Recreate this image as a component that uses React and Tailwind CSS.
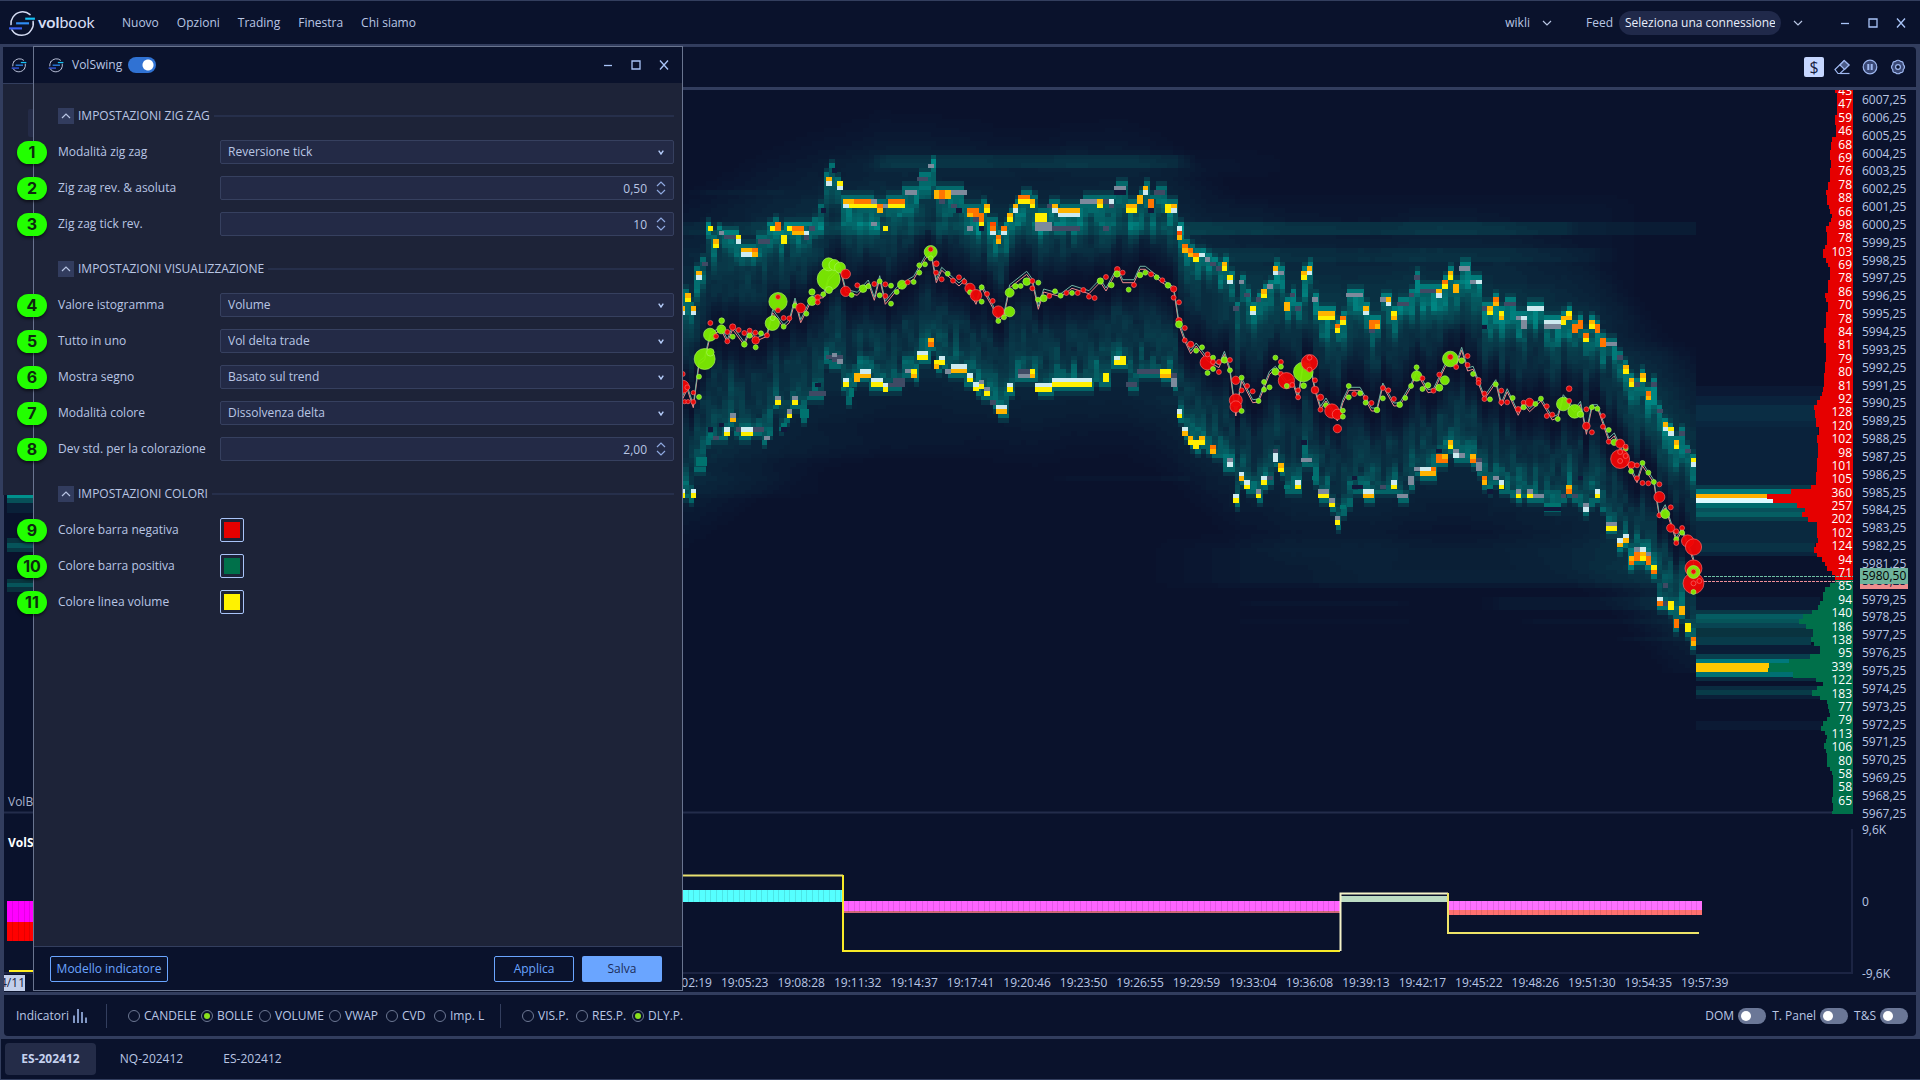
import React from "react";

/* ---------- chart data ---------- */

// Two recorded blocks of the session, each with its own sampling grid.
const MORNING = { x: 680, y: 130, sx: 1 / 3, sy: 1 / 3 };
const EVENING = { x: 1180, y: 220, sx: 540 / 1568, sy: 1 / 3 };

const place = (g, x, y) => [g.x + x * g.sx, g.y + y * g.sy];

// Liquidity marks: [x, y, width, one colour key for each price row]
const UPPER_A = [
  [14,490,18,"AY"],[0,529,14,"AW"],[33,529,14,"AW"],[48,423,17,"AW"],[66,395,17,"D"],[84,289,15,"Y"],[99,328,18,"AY"],[117,302,15,"G"],[133,315,34,"D"],[167,315,16,"YW"],[183,354,17,"AW"],[200,354,18,"AW"],[217,354,17,"OA"],[234,328,36,"D"],[270,289,15,"Y"],[285,276,17,"OO"],[302,315,18,"YY"],[320,289,16,"Y"],[336,289,36,"OA"],[372,302,14,"WD"],[387,289,17,"D"],[423,235,14,"N"],[438,141,18,"AW"],[455,115,16,"N"],[471,154,18,"YW"],[489,208,18,"AW"],[507,208,16,"AY"],[522,208,51,"OY"],[573,208,18,"GY"],[591,222,17,"OA"],[608,222,16,"G"],[624,208,51,"OY"],[675,181,36,"G"],[711,141,33,"D"],[744,101,17,"G"],[761,181,17,"AA"],[778,181,18,"OO"],[796,181,17,"AA"],[813,181,47,"G"],[861,235,36,"OA"],[880,248,18,"OD"],[897,248,15,"OOY"],[912,222,17,"AY"],[930,276,18,"ROW"],[947,315,16,"OA"],[963,289,18,"OW"],[981,249,18,"AY"],[999,222,15,"AW"],[1014,195,36,"OY"],[1050,208,15,"AY"],[1065,249,36,"YY"],[1101,222,15,"D"],[1116,222,18,"AW"],[1134,235,66,"AW"],[1200,208,51,"G"],[1251,208,17,"AY"],[1268,208,18,"D"],[1286,208,16,"WD"],[1302,168,35,"GN"],[1338,222,34,"AY"],[1372,195,17,"AA"],[1389,168,15,"AW"],[1404,208,17,"OO"],[1422,181,33,"D"],[1455,222,20,"YY"],[1472,222,19,"AW"],[1491,289,15,"WRA"],[1506,342,18,"OO"],[1524,354,16,"OO"],
];
const EXTRA_A = [
  [574,276,17,"G"],[609,289,15,"Y"],[778,208,17,"D"],[813,222,17,"D"],[828,235,17,"N"],[897,289,14,"N"],[861,289,18,"G"],[1065,276,50,"GG"],[1116,289,84,"D"],[1268,289,18,"D"],[1404,235,17,"N"],[405,758,17,"N"],[624,758,16,"D"],[84,892,15,"N"],[117,878,15,"N"],[99,918,18,"D"],[302,892,18,"N"],
];
const LOWER_A = [
  [0,1077,14,"WY"],[33,1077,14,"WY"],[48,980,34,"TT"],[84,910,15,"T"],[132,892,18,"WY"],[150,850,18,"GA"],[167,892,16,"D"],[183,892,35,"WY"],[218,892,34,"D"],[252,918,18,"G"],[285,798,17,"GY"],[302,878,18,"T"],[320,838,16,"GY"],[336,798,18,"GY"],[360,838,26,"TT"],[387,784,50,"D"],[438,675,18,"D"],[455,668,16,"GD"],[471,675,18,"DG"],[489,744,18,"WY"],[507,775,15,"TT"],[522,730,18,"AA"],[540,718,33,"WA"],[573,744,36,"WY"],[609,758,15,"WY"],[640,744,34,"DD"],[675,716,18,"G"],[693,718,18,"YA"],[711,663,33,"WY"],[744,624,17,"AO"],[761,690,17,"YA"],[778,677,17,"WY"],[795,718,18,"G"],[813,703,48,"WA"],[861,730,18,"WY"],[879,757,18,"WY"],[897,750,15,"GY"],[912,770,18,"GY"],[930,811,18,"D"],[948,825,33,"WA"],[981,758,18,"WY"],[1014,718,36,"DG"],[1050,718,15,"YA"],[1065,758,51,"WY"],[1116,744,120,"WY"],[1269,730,18,"YY"],[1302,677,18,"WY"],[1320,677,17,"YY"],[1338,757,33,"D"],[1371,718,69,"D"],[1440,718,33,"YA"],[1473,730,18,"DGG"],[1491,838,15,"WY"],[1506,892,18,"WA"],[1524,918,16,"YO"],
];
const UPPER_B = [
  [6,72,17,"OA"],[23,85,14,"OA"],[38,99,17,"OY"],[55,99,17,"W"],[72,112,16,"G"],[88,125,17,"D"],[105,139,17,"D"],[122,126,14,"AY"],[136,166,18,"YW"],[154,259,17,"D"],[171,180,15,"G"],[186,219,18,"D"],[204,259,16,"YW"],[220,232,15,"D"],[236,208,17,"AY"],[253,193,16,"G"],[270,139,15,"AW"],[285,153,16,"G"],[302,246,17,"AA"],[319,219,16,"D"],[335,259,17,"D"],[352,153,16,"AY"],[368,139,15,"AW"],[384,232,17,"G"],[401,274,48,"AY"],[449,312,17,"OY"],[465,287,17,"OY"],[482,219,49,"G"],[531,259,18,"AW"],[549,300,17,"OO"],[566,300,15,"OA"],[582,232,16,"G"],[598,232,15,"AW"],[613,274,17,"YA"],[630,246,34,"D"],[664,219,16,"D"],[680,166,17,"D"],[697,206,47,"D"],[744,206,17,"AW"],[761,180,17,"OY"],[778,153,15,"AY"],[793,193,17,"AA"],[810,139,31,"G"],[842,180,17,"G"],[859,180,17,"W"],[877,259,14,"D"],[892,259,17,"AY"],[909,232,16,"OA"],[925,274,17,"YA"],[942,246,34,"D"],[976,287,14,"G"],[990,287,17,"WGG"],[1008,259,49,"W"],[1057,300,49,"WG"],[1106,287,16,"AY"],[1122,274,16,"YA"],[1138,312,18,"OO"],[1155,300,15,"OO"],[1170,340,18,"OY"],[1188,300,17,"AY"],[1205,312,15,"OO"],[1220,354,17,"OO"],[1237,366,31,"G"],[1268,406,17,"D"],[1285,434,18,"AY"],[1303,474,15,"AY"],[1319,487,17,"D"],[1335,460,18,"AY"],[1353,514,15,"OA"],[1368,487,17,"D"],[1385,567,17,"D"],[1402,607,16,"AW"],[1418,621,15,"YW"],[1433,661,17,"AY"],[1450,634,16,"D"],[1466,687,17,"D"],[1484,714,14,"YW"],
];
const EXTRA_B = [
  [877,314,14,"N"],[549,326,17,"D"],[500,768,14,"N"],[500,794,31,"N"],[352,661,17,"N"],[892,808,17,"N"],[1057,861,49,"N"],[1155,768,15,"N"],[744,687,17,"N"],[1402,1090,16,"D"],[1450,1130,16,"T"],
];
const LOWER_B = [
  [6,621,17,"WA"],[23,648,15,"AY"],[38,661,17,"YY"],[55,648,17,"AY"],[88,675,17,"OA"],[136,714,18,"GW"],[154,821,17,"WY"],[171,755,15,"WA"],[186,781,18,"WY"],[220,808,15,"GY"],[236,768,17,"WY"],[253,768,16,"D"],[270,687,15,"DWW"],[285,730,16,"AY"],[302,794,17,"T"],[335,781,16,"WY"],[352,714,30,"G"],[384,768,17,"T"],[401,808,32,"GY"],[433,835,17,"GY"],[449,888,17,"GY"],[465,855,17,"T"],[500,794,31,"N"],[531,808,32,"WA"],[582,794,17,"D"],[613,781,17,"WY"],[630,821,32,"G"],[662,768,17,"GG"],[680,741,17,"G"],[697,741,32,"WA"],[729,741,15,"OA"],[744,703,17,"OO"],[761,703,17,"AO"],[778,661,15,"AY"],[793,687,17,"GW"],[810,700,17,"G"],[842,703,17,"AO"],[859,714,17,"DGG"],[877,768,14,"OA"],[892,794,17,"T"],[909,768,16,"G"],[925,781,17,"WY"],[976,808,14,"GY"],[1008,808,17,"GY"],[1025,821,32,"G"],[1057,848,49,"T"],[1106,821,15,"D"],[1122,794,16,"AO"],[1138,821,17,"D"],[1170,848,18,"GW"],[1205,808,15,"WY"],[1237,905,31,"GY"],[1268,955,17,"WA"],[1285,942,18,"WA"],[1303,1009,15,"AO"],[1318,982,17,"GOO"],[1335,982,18,"WAY"],[1353,996,15,"GOO"],[1368,1036,17,"YO"],[1385,1130,17,"WO"],[1402,1144,16,"D"],[1418,1144,15,"YY"],[1433,1198,17,"OO"],[1450,1157,16,"AA"],[1466,1209,17,"YY"],[1484,1250,14,"OA"],
];

const MARK_COLORS = { O: "#ff7500", R: "#ff4a00", A: "#ffb400", Y: "#fff000", W: "#cdeaf0", G: "#7d8a9c", D: "#3f4a64", N: "#10183a", T: "#00736f" };

// Trades: [x, y, radius, side]; side 1 buys, 0 sells
const TRADES_A = [
  [8,732,8,0],[8,770,20,0],[22,772,8,0],[40,788,7,0],[14,815,7,0],[24,815,7,0],[40,816,8,0],[74,687,32,1],[91,667,12,1],[57,740,8,1],[57,801,8,1],[91,579,8,0],[90,614,20,1],[108,619,8,0],[125,572,9,1],[124,598,14,1],[142,606,8,0],[142,634,8,0],[158,591,10,0],[158,620,8,1],[176,600,8,0],[193,609,8,0],[193,643,9,1],[209,602,8,0],[209,617,8,1],[226,608,8,0],[227,631,12,0],[227,652,8,1],[243,610,8,1],[261,616,8,0],[277,580,22,1],[278,564,8,1],[294,515,28,1],[294,501,8,0],[294,541,8,0],[311,564,8,0],[328,565,8,0],[311,590,8,1],[345,527,8,1],[362,534,15,0],[379,551,8,1],[396,486,10,1],[396,513,14,1],[413,502,9,0],[413,517,8,0],[430,493,8,1],[446,447,35,1],[446,403,20,1],[463,405,17,1],[480,413,17,1],[447,480,11,1],[497,432,15,0],[497,484,16,0],[515,495,8,1],[532,466,8,0],[549,476,12,1],[565,469,8,1],[583,462,8,0],[599,454,8,1],[599,496,8,1],[616,463,8,0],[616,498,8,0],[633,467,8,1],[633,521,8,1],[650,486,8,1],[666,464,14,1],[683,457,8,0],[701,456,8,1],[718,406,8,1],[718,428,8,1],[735,403,8,1],[752,366,20,1],[752,358,8,0],[752,385,8,1],[769,401,9,0],[768,428,8,0],[785,448,8,0],[803,431,8,1],[819,452,8,0],[837,442,8,0],[853,455,8,0],[870,475,16,0],[870,487,8,1],[888,496,18,0],[905,472,8,1],[905,515,8,1],[921,492,8,0],[938,513,8,0],[955,545,18,0],[955,573,8,1],[972,562,8,1],[989,545,16,1],[989,488,14,1],[1006,469,9,1],[1022,468,8,1],[1040,455,12,1],[1057,453,8,0],[1057,475,8,0],[1075,458,8,1],[1074,509,8,1],[1091,505,11,1],[1108,498,8,0],[1125,484,8,1],[1142,497,8,1],[1159,489,8,0],[1176,489,8,1],[1193,489,8,0],[1210,480,8,0],[1227,500,8,0],[1244,504,8,0],[1261,453,10,1],[1278,441,8,0],[1294,465,9,1],[1312,418,9,0],[1311,432,10,1],[1328,428,8,0],[1346,479,8,1],[1362,465,8,0],[1380,435,9,1],[1396,428,8,1],[1413,433,8,0],[1430,442,8,1],[1447,451,8,0],[1464,466,9,1],[1481,477,10,0],[1481,503,8,0],[1497,517,8,0],[1497,572,10,0],[1497,583,11,1],
];
const TRADES_B = [
  [14,324,8,0],[14,361,8,0],[31,373,10,0],[47,392,8,1],[64,382,8,1],[79,428,22,0],[80,403,8,0],[96,413,8,1],[96,426,8,0],[113,426,8,0],[96,447,8,1],[80,459,8,1],[113,456,8,0],[129,420,10,1],[145,420,8,0],[145,451,8,1],[162,481,13,0],[179,473,8,1],[195,498,8,0],[179,511,8,0],[211,514,8,0],[162,541,20,0],[162,560,18,0],[179,573,8,1],[228,543,8,1],[244,486,8,1],[244,509,8,1],[260,502,8,1],[277,413,8,1],[277,455,11,1],[293,426,8,0],[293,440,8,1],[293,462,8,0],[309,482,25,0],[310,498,8,1],[326,495,8,0],[343,511,8,0],[343,532,8,0],[358,456,30,1],[376,428,25,0],[376,413,8,0],[376,449,8,0],[359,497,9,1],[392,481,8,0],[392,510,12,0],[408,532,10,0],[408,569,8,0],[424,556,8,1],[441,573,22,0],[457,583,16,0],[473,572,8,1],[473,590,8,1],[457,626,13,0],[490,498,8,1],[490,532,8,1],[506,522,8,0],[523,520,8,1],[539,534,8,0],[539,548,8,1],[556,549,8,0],[572,570,9,1],[589,504,8,0],[589,535,8,1],[605,511,8,0],[621,537,8,0],[638,554,9,1],[654,534,8,1],[671,498,8,1],[687,442,8,1],[687,468,16,1],[704,475,8,0],[704,507,8,1],[720,496,9,1],[736,512,8,0],[753,464,8,0],[753,503,11,1],[769,481,14,1],[785,417,24,1],[785,411,9,0],[802,441,8,0],[818,422,9,1],[835,408,8,0],[835,435,8,0],[851,462,8,1],[867,480,8,0],[867,489,8,0],[884,521,8,0],[884,537,8,0],[900,538,8,1],[917,493,8,1],[933,512,8,0],[933,547,8,0],[950,547,8,0],[966,534,8,1],[982,568,9,0],[998,548,8,0],[998,562,8,1],[1015,547,13,0],[1032,552,8,1],[1048,536,8,1],[1065,559,8,0],[1065,588,8,0],[1081,584,8,0],[1097,597,8,1],[1113,552,21,1],[1130,506,9,0],[1130,543,8,0],[1146,574,21,1],[1163,583,10,1],[1180,568,8,0],[1180,618,12,0],[1196,637,8,0],[1196,562,8,1],[1212,566,8,1],[1228,588,8,0],[1228,620,8,0],[1245,630,8,1],[1245,665,8,0],[1261,667,10,1],[1278,671,14,0],[1294,686,8,1],[1294,680,8,0],[1278,717,29,0],[1278,696,8,0],[1294,708,8,0],[1278,723,8,0],[1311,735,11,0],[1310,754,8,1],[1327,736,8,0],[1327,775,8,0],[1343,729,8,1],[1343,789,8,0],[1360,758,8,1],[1360,790,8,0],[1376,786,8,1],[1392,793,8,0],[1392,831,17,0],[1392,886,8,0],[1409,882,14,1],[1425,862,8,0],[1425,924,13,0],[1441,934,8,0],[1441,958,8,1],[1441,969,8,0],[1458,924,8,0],[1458,938,8,1],[1474,963,19,0],[1491,981,25,0],[1491,1045,26,0],[1491,1090,32,0],[1491,1056,20,1],[1491,1055,8,0],[1508,1083,8,0],[1491,1090,8,0],[1491,1116,8,1],
];
const MID_A = [[0,820],[22,775],[40,830],[57,700],[74,687],[91,614],[124,598],[142,634],[158,595],[193,643],[209,602],[227,631],[261,616],[278,545],[311,590],[328,575],[345,510],[362,575],[396,505],[430,500],[446,447],[480,413],[497,484],[532,493],[565,456],[583,508],[599,443],[616,520],[650,478],[683,455],[701,445],[718,415],[735,385],[752,366],[769,455],[785,418],[837,465],[853,450],[888,520],[905,470],[938,530],[955,573],[972,555],[989,470],[1040,430],[1057,453],[1075,535],[1091,483],[1142,497],[1176,472],[1227,488],[1261,453],[1278,480],[1312,418],[1328,455],[1362,455],[1380,415],[1396,415],[1447,455],[1481,477],[1497,583]];
const MID_B = [[14,361],[31,398],[47,375],[80,420],[113,440],[129,400],[145,451],[162,585],[179,480],[211,545],[228,543],[260,460],[277,445],[310,490],[326,482],[343,535],[358,430],[376,428],[392,510],[408,565],[424,540],[457,600],[473,545],[490,508],[523,508],[556,570],[572,570],[589,495],[621,555],[638,554],[671,498],[687,455],[720,515],[736,512],[769,440],[785,417],[802,435],[818,388],[835,450],[851,445],[884,535],[917,485],[933,555],[950,512],[982,583],[998,550],[1015,572],[1048,540],[1081,597],[1097,590],[1113,530],[1146,574],[1163,550],[1180,640],[1196,560],[1212,560],[1245,660],[1261,645],[1294,720],[1327,785],[1343,735],[1376,786],[1392,890],[1409,860],[1441,960],[1458,930],[1491,1020],[1491,1090]];

// Volume profile outline: [bottom, left edge] in thirds of a pixel
const PROFILE_SELL = [
  [279,465],[345,471],[374,466],[410,468],[425,457],[450,454],[480,450],[505,454],[545,449],[570,443],[585,438],[614,442],[628,447],[642,450],[655,456],[666,453],[678,448],[695,438],[735,442],[748,436],[762,430],[773,430],[790,438],[800,444],[840,450],[880,444],[895,436],[905,438],[935,444],[985,438],[1030,432],[1085,438],[1120,434],[1162,432],[1175,429],[1188,426],[1200,420],[1215,411],[1230,402],[1255,406],[1280,409],[1305,417],[1330,411],[1375,414],[1415,411],[1455,408],[1467,393],[1482,333],[1497,261],[1510,279],[1523,351],[1536,376],[1550,366],[1565,384],[1615,411],[1630,414],[1640,408],[1658,402],[1670,411],[1685,426],[1698,435],[1712,441],[1725,456],[1740,465],
];
const PROFILE_BUY = [
  [1750,465],[1762,450],[1776,436],[1802,429],[1815,420],[1830,414],[1843,396],[1856,369],[1872,357],[1887,378],[1910,399],[1925,393],[1938,402],[1962,420],[1976,390],[1988,327],[2003,267],[2016,264],[2033,339],[2045,408],[2058,429],[2070,411],[2087,396],[2100,420],[2113,441],[2127,444],[2140,447],[2152,450],[2163,441],[2177,429],[2192,423],[2205,435],[2217,441],[2230,438],[2247,432],[2260,438],[2302,441],[2313,450],[2325,456],[2390,459],[2410,456],[2433,459],[2442,456],
];
const PROFILE_VALUES = [43,47,59,46,68,69,76,78,88,66,98,78,103,69,78,86,70,78,84,81,79,80,81,92,128,120,102,98,101,105,360,257,202,102,124,94,71,85,94,140,186,138,95,339,122,183,77,79,113,106,80,58,58,65];

// Resting orders right of the last trade: [top, bottom, right edge, colour]
const BOOK = [
  [386,396,1830,"#0b1934"],[396,405,1825,"#0a223c"],[405,421,1818,"#0a2d44"],[421,427,1818,"#0a263f"],[427,485,1818,"#0a223b"],[485,489,1812,"#083b4b"],[489,494,1791,"#00797b"],[494,498,1767,"#ffb000"],[498,503,1773,"#ddfaff"],[503,508,1797,"#006a6c"],[508,512,1805,"#08505a"],[512,517,1802,"#055e62"],[517,521,1808,"#083f4c"],[521,543,1818,"#0a293f"],[543,552,1815,"#093245"],[552,556,1818,"#0a243d"],
  [597,610,1820,"#0b1b35"],[610,614,1812,"#093846"],[614,619,1803,"#055c62"],[619,623,1799,"#065459"],[623,628,1806,"#084452"],[628,637,1813,"#09333f"],[637,645,1811,"#083b4a"],[645,654,1820,"#0a1c36"],[654,659,1810,"#083f4e"],[659,663,1789,"#00797c"],[663,672,1769,"#ffc800"],[672,677,1793,"#007072"],[677,681,1816,"#0a2b40"],[686,690,1817,"#0a2b40"],[690,695,1812,"#083b48"],[695,699,1820,"#0a1f38"],[721,730,1822,"#0b1a34"],
];

// Wide faint levels: [left, right, top, bottom, strength, edge softness]
const LEVELS = [
  [640,1720,222,235,0.14,30],[870,1196,155,168,0.16,20],[820,1300,144,180,0.07,80],[683,800,190,196,0.08,20],[1180,1583,222,234,0.1,20],
  [1180,1620,247,260,0.1,30],[1200,1650,190,330,0.08,60],[1600,1720,340,470,0.1,60],
  [1140,1720,532,590,0.15,120],[1300,1720,551,589,0.05,60],[1052,1200,474,480,0.08,20],
  [1233,1416,601,605,0.06,20],[1480,1700,598,612,0.1,20],[1233,1416,618,622,0.05,20],[1516,1700,618,622,0.07,20],[1610,1700,636,640,0.08,20],
  [640,830,460,500,0.08,60],[640,1000,425,462,0.06,80],
];

/* ---------- heatmap ---------- */

const X0 = 683;
const X1 = 1696;
const COLS = 180;
const CW = (X1 - X0) / COLS;
const RH = 13.4 / 3;
const Y0 = 92;
const ROWS = 130;
const STEPS = 28;

const rand = (a, b) => {
  const s = Math.sin(a * 127.1 + b * 311.7) * 43758.5453;
  return s - Math.floor(s);
};

// Value noise along one column, smooth over a few price rows
const grain = (c, r, span) => {
  const i = Math.floor(r / span);
  const f = r / span - i;
  return rand(c, i) * (1 - f) + rand(c, i + 1) * f - 0.5;
};

const clamp = (v) => Math.max(0, Math.min(1, v));

const toMarks = (list, g) =>
  list.map(([x, y, w, k]) => {
    const [px, py] = place(g, x, y);
    return { x: px, y: py, w: w * g.sx, k };
  });

const upper = [...toMarks(UPPER_A, MORNING), ...toMarks(UPPER_B, EVENING)];
const lower = [...toMarks(LOWER_A, MORNING), ...toMarks(LOWER_B, EVENING)];
const extra = [...toMarks(EXTRA_A, MORNING), ...toMarks(EXTRA_B, EVENING)];
const mid = [...MID_A.map(([x, y]) => place(MORNING, x, y)), ...MID_B.map(([x, y]) => place(EVENING, x, y))];
const trades = [
  ...TRADES_A.map(([x, y, r, s]) => [...place(MORNING, x, y), r / 3, s]),
  ...TRADES_B.map(([x, y, r, s]) => [...place(EVENING, x, y), r / 3, s]),
];

const interpolate = (pts, x) => {
  for (let i = 1; i < pts.length; i++) {
    if (x <= pts[i][0]) {
      const [ax, ay] = pts[i - 1];
      const [bx, by] = pts[i];
      return bx === ax ? by : ay + ((by - ay) * Math.max(0, x - ax)) / (bx - ax);
    }
  }
  return pts[pts.length - 1][1];
};

const bandAt = (marks, x) => {
  const hit = marks.find((m) => x >= m.x - 1 && x <= m.x + m.w);
  if (hit) return [hit.y, hit.y + hit.k.length * RH];
  const y = interpolate(marks.map((m) => [m.x + m.w / 2, m.y]), x);
  return [y, y + RH];
};

const shade = (t) => {
  const stops = [[0,10,17,44],[0.25,10,36,58],[0.5,8,64,77],[0.75,3,100,103],[1,0,138,134]];
  for (let i = 1; i < stops.length; i++) {
    if (t <= stops[i][0]) {
      const a = stops[i - 1];
      const b = stops[i];
      const f = (t - a[0]) / (b[0] - a[0]);
      return `rgb(${[1, 2, 3].map((k) => Math.round(a[k] + (b[k] - a[k]) * f)).join(",")})`;
    }
  }
  return "rgb(0,138,134)";
};

const buildHeatmap = () => {
  const paths = Array.from({ length: STEPS + 1 }, () => "");
  for (let c = 0; c < COLS; c++) {
    const x = X0 + c * CW;
    const cx = x + CW / 2;
    const [uTop, uBot] = bandAt(upper, cx);
    const [lTop, lBot] = bandAt(lower, cx);
    let uAvg = 0;
    let lAvg = 0;
    for (let k = -10; k <= 10; k++) {
      const sx = Math.min(X1 - 4, Math.max(X0 + 4, cx + k * CW));
      uAvg += bandAt(upper, sx)[0] / 21;
      lAvg += bandAt(lower, sx)[1] / 21;
    }
    const m = interpolate(mid, cx);
    const halo = 2 + Math.floor(rand(c, 5) * 3);
    let run = -1;
    let start = 0;
    for (let r = 0; r <= ROWS; r++) {
      const y = Y0 + r * RH + RH / 2;
      let v = 0;
      const n = grain(c, r, 3);
      const wide = grain(Math.floor(c / 12) + 500, r, 2);
      if (y < uTop) {
        const far = Math.max(0, uAvg - y);
        v = 0.3 * clamp(1 - far / 85) + wide * 0.06 * clamp(1 - far / 80);
        if (uTop - y < RH * 1.2) v = 0.8;
        else if (uTop - y < RH * 2.2) v = Math.max(v, 0.42);
      } else if (y > lBot) {
        const far = Math.max(0, y - lAvg);
        v = 0.26 * clamp(1 - far / 80) + wide * 0.06 * clamp(1 - far / 70);
        if (y - lBot < RH * 1.2) v = 0.74;
        else if (y - lBot < RH * 2.2) v = Math.max(v, 0.4);
      } else {
        const du = Math.max(0, y - uBot);
        const dl = Math.max(0, lTop - y);
        const near = clamp((Math.abs(y - m) - 9) / 30);
        v = (0.31 + n * 0.1) * near;
        if (du < dl) {
          if (du < RH * halo) v += (0.42 + n * 0.25) * near;
          else v += (0.3 + n * 0.3) * Math.exp(-(du - RH * halo) / 14) * near;
        } else if (dl < RH * (halo - 1)) v += (0.34 + n * 0.3) * near;
        else v += (0.22 + n * 0.34) * Math.exp(-(dl - RH * (halo - 1)) / 22) * near;
      }
      LEVELS.forEach(([a, b, t, e, s, soft]) => {
        if (cx > a && cx < b && y > t && y < e) {
          const fade = clamp((cx - a) / soft) * clamp((b - cx) / soft);
          const rise = e - t > 20 ? clamp((y - t) / 18) * clamp((e - y) / 8) : 1;
          v += s * fade * rise * (Math.abs(y - m) < 25 ? 0.2 : 1);
        }
      });
      const step = r === ROWS ? -2 : Math.round(clamp(v) * STEPS);
      if (step !== run) {
        if (run > 0) {
          paths[run] += `M${x.toFixed(2)} ${(Y0 + start * RH).toFixed(2)}h${CW.toFixed(2)}v${((r - start) * RH).toFixed(2)}h-${CW.toFixed(2)}z`;
        }
        run = step;
        start = r;
      }
    }
  }
  return paths;
};

const heatPaths = buildHeatmap();

const outline = (list, top) => {
  let d = `M1853 ${top / 3}`;
  let y = top;
  list.forEach(([bottom, edge]) => {
    d += `L${1680 + edge / 3} ${y / 3}V${bottom / 3}`;
    y = bottom;
  });
  return `${d}H1853Z`;
};

const line = (dy) => mid.map(([x, y]) => `${x.toFixed(1)},${(y + dy).toFixed(1)}`).join(" ");

function Marks({ list }) {
  return list.map((m, i) =>
    m.k.split("").map((k, j) => (
      <rect key={`${i}-${j}`} x={m.x} y={m.y + j * RH} width={m.w} height={RH} fill={MARK_COLORS[k]} />
    ))
  );
}

function Ticks({ from, to, top, bottom }) {
  let d = "";
  for (let x = from + 5.65; x < to; x += 5.65) d += `M${x.toFixed(1)} ${top}V${bottom}`;
  return <path d={d} stroke="#000" strokeOpacity=".1" />;
}

function Chart() {
  return (
    <svg viewBox="4 90 1849 884" preserveAspectRatio="xMaxYMin slice" className="block h-full w-full" role="img" aria-label="Heatmap ES-202412">
      <g shapeRendering="crispEdges">
        {heatPaths.map((d, i) => (d ? <path key={i} d={d} fill={shade(i / STEPS)} /> : null))}
        <Marks list={upper} />
        <Marks list={lower} />
        <Marks list={extra} />
        {BOOK.map(([t, b, r, c]) => (
          <rect key={t} x="1696" y={t} width={r - 1696} height={b - t} fill={c} />
        ))}
        <rect x="7" y="495" width="26" height="3" fill="#00908c" />
        <rect x="7" y="498" width="26" height="5" fill="#075058" />
        <rect x="7" y="503" width="26" height="10" fill="#0a2038" />
        <rect x="7" y="538" width="26" height="5" fill="#08343f" />
        <rect x="7" y="543" width="26" height="5" fill="#06545a" />
        <rect x="7" y="548" width="26" height="4" fill="#083844" />
        <rect x="7" y="579" width="26" height="4" fill="#08363f" />
        <rect x="7" y="583" width="26" height="4" fill="#06545a" />
        <rect x="7" y="587" width="26" height="5" fill="#0a303d" />
        <path d={outline(PROFILE_SELL, 270)} fill="#e60000" />
        <path d={outline(PROFILE_BUY, 1740)} fill="#00704a" />
      </g>
      <polyline points={line(1)} fill="none" stroke="#f08a8a" strokeWidth="1" />
      <polyline points={line(-2)} fill="none" stroke="#6fb3a0" strokeWidth="1" />
      {trades.map(([x, y, r, s], i) => (
        <circle key={i} cx={x} cy={y} r={r - 0.2} fill={s ? "#7ded00" : "#f00505"} fillOpacity=".95" stroke={s ? "#a5f060" : "#f56a6a"} strokeWidth=".7" />
      ))}
      <path d="M1704 576.5H1853" stroke="#6fbfa5" strokeDasharray="3 1" />
      <path d="M1704 581.5H1853" stroke="#ef8f98" strokeDasharray="3 1" />
      <g fill="#fff" fontSize="12" textAnchor="end">
        {PROFILE_VALUES.map((v, i) => (
          <text key={i} x="1852" y={95 + i * 13.39}>{v}</text>
        ))}
      </g>

      <path d="M4 812.5H1832" stroke="#232c4b" strokeWidth="2" />
      <path d="M1852 829V973M4 973H1853" stroke="#1c2443" strokeWidth="2" fill="none" />
      <g shapeRendering="crispEdges">
        <rect x="7" y="901" width="26" height="21" fill="#ff00ff" />
        <rect x="7" y="922" width="26" height="19" fill="#f00" />
        <Ticks from={7} to={33} top={901} bottom={941} />
        <rect x="9" y="970" width="24" height="2" fill="#ffee20" />
        <rect x="660" y="890" width="183" height="12" fill="#55ffff" />
        <Ticks from={660} to={843} top={890} bottom={902} />
        <rect x="843" y="901" width="497" height="11" fill="#ff64ff" />
        <rect x="843" y="911" width="497" height="2" fill="#d0687a" />
        <Ticks from={843} to={1340} top={901} bottom={912} />
        <rect x="1340" y="896" width="108" height="6" fill="#bddcc4" />
        <rect x="1448" y="901" width="254" height="9" fill="#ff70ff" />
        <rect x="1448" y="910" width="254" height="5" fill="#ff7070" />
        <Ticks from={1448} to={1702} top={901} bottom={915} />
      </g>
      <g fill="none" strokeWidth="2">
        <path d="M660 875.5H843" stroke="#e8e070" />
        <path d="M843 875V951H1340" stroke="#f8ea28" />
        <path d="M1340.500 951V893.500H1448" stroke="#f4f2c8" />
        <path d="M1448 893V933H1699" stroke="#eee468" />
      </g>
      <g fontSize="12">
        <text x="8" y="806" fill="#a9b3cd">VolBook</text>
        <text x="8" y="847" fill="#fff" fontWeight="700">VolSwing</text>
      </g>
    </svg>
  );
}

/* ---------- interface ---------- */

const PRICES = Array.from({ length: 41 }, (_, i) => `${6007 - i},25`);
const LAST_BID = "5980,25";
const LAST_ASK = "5980,50";
const TIMES = ["19:02:19","19:05:23","19:08:28","19:11:32","19:14:37","19:17:41","19:20:46","19:23:50","19:26:55","19:29:59","19:33:04","19:36:08","19:39:13","19:42:17","19:45:22","19:48:26","19:51:30","19:54:35","19:57:39"];

function Logo({ className }) {
  return (
    <svg viewBox="0 0 26 24" className={className} fill="none" aria-hidden="true">
      <path d="M4.600 6.600A10.600 10.600 0 0 1 20.500 4.200M2.800 13.500a10.600 10.600 0 0 1 1.800-6.900M3.600 18.300A10.600 10.600 0 0 0 21.800 18.200M23.300 10.500a10.600 10.600 0 0 1-1.500 7.700" stroke="#d5dcf3" strokeWidth="1.400" strokeLinecap="round" />
      <path d="M16 8h9" stroke="#16c4f7" strokeWidth="2" />
      <path d="M7.500 12.300h12" stroke="#2f8df5" strokeWidth="2" />
      <path d="M1 17h12" stroke="#3a62f2" strokeWidth="2" />
    </svg>
  );
}

function Chevron({ up, className }) {
  return (
    <svg viewBox="0 0 10 6" className={className} fill="none" stroke="currentColor" strokeWidth="1.200" aria-hidden="true">
      <path d={up ? "M1 5l4-4 4 4" : "M1 1l4 4 4-4"} />
    </svg>
  );
}

function WindowButtons() {
  return (
    <div className="flex items-center text-[#a9c4f8]">
      <button type="button" aria-label="Riduci" className="flex h-6 w-7 items-center justify-center">
        <svg viewBox="0 0 10 10" className="size-2.5" stroke="currentColor" strokeWidth="1.300"><path d="M1 5.500h8" /></svg>
      </button>
      <button type="button" aria-label="Ingrandisci" className="flex h-6 w-7 items-center justify-center">
        <svg viewBox="0 0 10 10" className="size-2.5" stroke="currentColor" strokeWidth="1.300" fill="none"><path d="M1 1h8v8H1z" /></svg>
      </button>
      <button type="button" aria-label="Chiudi" className="flex h-6 w-7 items-center justify-center">
        <svg viewBox="0 0 10 10" className="size-2.5" stroke="currentColor" strokeWidth="1.300"><path d="M1 .5l8 9M9 .5l-8 9" /></svg>
      </button>
    </div>
  );
}

function Switch({ label, on }) {
  return (
    <label className="flex items-center gap-1">
      <span>{label}</span>
      <span className="relative flex">
        <input type="checkbox" role="switch" defaultChecked={on} className="peer h-4 w-7 appearance-none rounded-full bg-[#6b7797] checked:bg-[#3072d3]" />
        <span className="pointer-events-none absolute top-[3px] left-[3px] size-2.5 rounded-full bg-white peer-checked:left-[15px]" />
      </span>
    </label>
  );
}

function TopBar() {
  return (
    <header className="flex h-11 items-center border-t border-[#333e5e] bg-[#0a122c] pl-2">
      <Logo className="h-7 w-7" />
      <span className="ml-0.5 w-20 pb-0.5 text-base text-[#d5dcf3] [font-family:Lato,sans-serif]">
        <b>vol</b>book
      </span>
      <nav className="flex gap-[18px] pl-1">
        {["Nuovo", "Opzioni", "Trading", "Finestra", "Chi siamo"].map((t) => (
          <a key={t} href="#" className="text-[#b9c6e4]">{t}</a>
        ))}
      </nav>
      <div className="ml-auto flex items-center">
        <button type="button" className="flex items-center gap-3">
          wikli <Chevron className="h-1.5 w-2.5" />
        </button>
        <label htmlFor="feed" className="mr-1.5 ml-[34px]">Feed</label>
        <span className="relative flex items-center">
          <select id="feed" className="h-6 w-[162px] appearance-none rounded-xl bg-[#20294a] px-1.5 text-[#e8eefc]">
            <option>Seleziona una connessione</option>
          </select>
          <Chevron className="mr-7 ml-3 h-1.5 w-2.5 shrink-0" />
        </span>
        <span className="mr-[5px] flex"><WindowButtons /></span>
      </div>
    </header>
  );
}

function ChartToolbar() {
  return (
    <div className="flex h-10 items-center justify-end gap-2 rounded-t bg-[#0a122c] pr-2 text-[#9fb8f0]">
      <button type="button" aria-label="Dollaro" className="flex size-5 items-center justify-center rounded-xs bg-[#c6d6ff] text-base font-medium text-[#16203f]">$</button>
      <button type="button" aria-label="Cancella" className="flex size-5 items-center justify-center">
        <svg viewBox="0 0 16 16" className="size-4" fill="none" stroke="currentColor" strokeWidth="1.200">
          <path d="M1 10.500L10.200 1.500 15 6 6 14.500H4z" />
          <path d="M6 6l4.600 4.400L15 6l-4.800-4.500z" fill="#4a5a86" />
          <path d="M6 14.500h9.500" />
        </svg>
      </button>
      <button type="button" aria-label="Pausa" className="flex size-5 items-center justify-center">
        <svg viewBox="0 0 16 16" className="size-4" stroke="currentColor">
          <circle cx="8" cy="8" r="6.800" fill="#3a4875" strokeWidth="1.200" />
          <path d="M6.300 5v6M9.700 5v6" strokeWidth="2" />
        </svg>
      </button>
      <button type="button" aria-label="Impostazioni" className="flex size-5 items-center justify-center">
        <svg viewBox="0 0 16 16" className="size-4" stroke="currentColor" strokeWidth="1.200">
          <path d="M5.500 2.300Q8 .2 10.500 2.300 13.500 2.400 13.200 5.300 15.800 8 13.200 10.700 13.500 13.600 10.500 13.700 8 15.800 5.500 13.700 2.500 13.600 2.800 10.700.2 8 2.800 5.300 2.500 2.400 5.500 2.300z" fill="#3a4875" />
          <circle cx="8" cy="8" r="2.400" fill="#0a122c" />
        </svg>
      </button>
    </div>
  );
}

function PriceAxis() {
  return (
    <div className="relative flex w-[63px] shrink-0 flex-col pl-[9px]">
      <div className="flex h-[732px] flex-col justify-between pt-0.5">
        {PRICES.map((p) => (
          <span key={p} className="h-4 leading-4">{p === LAST_BID ? null : p}</span>
        ))}
      </div>
      <div className="flex flex-1 flex-col justify-between">
        <span className="leading-4">9,6K</span>
        <span className="leading-4">0</span>
        <span className="-mb-2 leading-4">-9,6K</span>
      </div>
      <span className="absolute top-[483px] left-[7px] h-4 w-12 bg-[#ef8d8d] px-0.5 leading-4 text-[#16203f]">{LAST_BID}</span>
      <span className="absolute top-[478px] left-[7px] h-4 w-12 bg-[#6fb39c] px-0.5 leading-4 text-black">{LAST_ASK}</span>
    </div>
  );
}

function TimeAxis() {
  return (
    <div className="flex h-[18px] items-center">
      <span className="flex h-4 w-[21px] justify-end overflow-hidden bg-[#c3cfea] leading-4 text-[#16203f]">24/11</span>
      <div className="mr-[183px] ml-[635px] grid flex-1 grid-cols-19 text-center">
        {TIMES.map((t) => (
          <span key={t} className="leading-4">{t}</span>
        ))}
      </div>
    </div>
  );
}

function Radio({ name, label, checked, className }) {
  return (
    <label className={`flex items-center gap-1 whitespace-nowrap ${className}`}>
      <span className="relative flex size-3">
        <input type="radio" name={name} defaultChecked={checked} className="peer size-3 appearance-none rounded-full border border-[#6d7894]" />
        <span className="pointer-events-none absolute top-[3px] left-[3px] hidden size-1.5 rounded-full bg-[#8ae01c] peer-checked:block" />
      </span>
      {label}
    </label>
  );
}

function IndicatorBar() {
  return (
    <div className="flex h-[41px] items-center rounded-b bg-[#0a122c] pr-2 pl-3">
      <button type="button" className="flex w-[90px] items-center gap-1">
        Indicatori
        <svg viewBox="0 0 14 14" className="size-3.5" stroke="#a9c4f8" strokeWidth="1.500"><path d="M1 14V6.500M5 14V0M9 14V3M13 14V8.500" /></svg>
      </button>
      <span className="h-6 w-px bg-[#333e5e]" />
      <fieldset className="flex pl-[21px]">
        <Radio name="stile" label="CANDELE" className="w-[73px]" />
        <Radio name="stile" label="BOLLE" checked className="w-[58px]" />
        <Radio name="stile" label="VOLUME" className="w-[70px]" />
        <Radio name="stile" label="VWAP" className="w-[57px]" />
        <Radio name="stile" label="CVD" className="w-12" />
        <Radio name="stile" label="Imp. L" className="w-[66px]" />
      </fieldset>
      <span className="h-6 w-px bg-[#333e5e]" />
      <fieldset className="flex pl-[21px]">
        <Radio name="profilo" label="VIS.P." className="w-[54px]" />
        <Radio name="profilo" label="RES.P." className="w-14" />
        <Radio name="profilo" label="DLY.P." checked className="w-14" />
      </fieldset>
      <div className="ml-auto flex gap-1.5">
        <Switch label="DOM" />
        <Switch label="T. Panel" />
        <Switch label="T&S" />
      </div>
    </div>
  );
}

function Tabs() {
  return (
    <footer className="flex h-[41px] items-center gap-2.5 border-b border-l border-[#333e5e] bg-[#0a122c] pl-1">
      <button type="button" className="h-8 w-[91px] rounded bg-[#242c48] font-bold text-[#c5d1ee]">ES-202412</button>
      <button type="button" className="h-8 w-[91px]">NQ-202412</button>
      <button type="button" className="h-8 w-[91px]">ES-202412</button>
    </footer>
  );
}

function Section({ title, children }) {
  return (
    <section className="mb-[25px]">
      <h2 className="mb-4 flex h-4 items-center">
        <button type="button" aria-label={title} className="mr-1 flex size-4 items-center justify-center bg-[#323c5e]">
          <Chevron up className="h-1.5 w-2.5" />
        </button>
        {title}
        <span className="ml-1 h-0.5 flex-1 bg-[#262f4b]" />
      </h2>
      <div className="flex flex-col gap-3">{children}</div>
    </section>
  );
}

function Row({ n, id, label, children }) {
  return (
    <div className="relative flex h-6 items-center">
      <span className="absolute -left-[41px] flex h-[23px] w-[30px] items-center justify-center rounded-full bg-[#22ff00] text-base font-bold text-[#0d2a10] shadow-[0_2px_3px_#0008] [font-family:Inter,sans-serif]">{n}</span>
      <label htmlFor={id} className="w-[162px] shrink-0">{label}</label>
      {children}
    </div>
  );
}

function SelectRow({ n, label, value }) {
  const id = `campo-${n}`;
  return (
    <Row n={n} id={id} label={label}>
      <span className="relative flex flex-1 items-center">
        <select id={id} className="h-6 w-full appearance-none rounded-xs border border-[#36405f] bg-[#232a46] px-[7px]">
          <option>{value}</option>
        </select>
        <svg viewBox="0 0 6 5" className="pointer-events-none absolute right-2.5 h-[5px] w-1.5" fill="none" stroke="#b5ccfa" strokeWidth="1.400" aria-hidden="true"><path d="M.7 .7L3 4 5.300 .7" /></svg>
      </span>
    </Row>
  );
}

function NumberRow({ n, label, value }) {
  const id = `campo-${n}`;
  return (
    <Row n={n} id={id} label={label}>
      <span className="relative flex flex-1 items-center">
        <input id={id} type="text" inputMode="decimal" defaultValue={value} className="h-6 w-full rounded-xs border border-[#36405f] bg-[#232a46] pr-[26px] text-right" />
        <span className="absolute right-2 flex flex-col gap-0.5 text-[#8fa9e0]">
          <button type="button" aria-label="Aumenta"><Chevron up className="h-1.5 w-2.5" /></button>
          <button type="button" aria-label="Riduci"><Chevron className="h-1.5 w-2.5" /></button>
        </span>
      </span>
    </Row>
  );
}

function ColorRow({ n, label, swatch }) {
  const id = `campo-${n}`;
  return (
    <Row n={n} id={id} label={label}>
      <button id={id} type="button" className="size-6 rounded-xs border border-[#a9c4f8] p-[3px]">
        <span className={`block size-4 ${swatch}`} />
      </button>
    </Row>
  );
}

function SettingsDialog() {
  return (
    <div role="dialog" aria-label="VolSwing" className="absolute top-[46px] bottom-[89px] left-[33px] flex w-[650px] flex-col border border-[#69748f] bg-[#1d2338]">
      <div className="flex h-9 shrink-0 items-center bg-[#0a122c] pr-1 pl-3.5">
        <Logo className="mr-2 h-4 w-4" />
        <span className="mr-1.5">VolSwing</span>
        <input type="checkbox" role="switch" aria-label="VolSwing" defaultChecked className="h-4 w-7 appearance-none rounded-full bg-[#3072d3] bg-[radial-gradient(circle_at_20px_8px,white_5px,transparent_6px)]" />
        <span className="ml-auto flex"><WindowButtons /></span>
      </div>
      <form className="flex-1 pt-[25px] pr-2 pl-6" onSubmit={(e) => e.preventDefault()}>
        <Section title="IMPOSTAZIONI ZIG ZAG">
          <SelectRow n={1} label="Modalità zig zag" value="Reversione tick" />
          <NumberRow n={2} label="Zig zag rev. & asoluta" value="0,50" />
          <NumberRow n={3} label="Zig zag tick rev." value="10" />
        </Section>
        <Section title="IMPOSTAZIONI VISUALIZZAZIONE">
          <SelectRow n={4} label="Valore istogramma" value="Volume" />
          <SelectRow n={5} label="Tutto in uno" value="Vol delta trade" />
          <SelectRow n={6} label="Mostra segno" value="Basato sul trend" />
          <SelectRow n={7} label="Modalità colore" value="Dissolvenza delta" />
          <NumberRow n={8} label="Dev std. per la colorazione" value="2,00" />
        </Section>
        <Section title="IMPOSTAZIONI COLORI">
          <ColorRow n={9} label="Colore barra negativa" swatch="bg-[#e60000]" />
          <ColorRow n={10} label="Colore barra positiva" swatch="bg-[#00704a]" />
          <ColorRow n={11} label="Colore linea volume" swatch="bg-[#fff200]" />
        </Section>
      </form>
      <div className="flex h-11 shrink-0 items-center gap-2 border-t border-[#333e5e] bg-[#0a122c] pr-5 pl-4 text-[#6aa5ff]">
        <button type="button" className="h-[26px] w-[118px] rounded-xs border border-[#6aa5ff]">Modello indicatore</button>
        <button type="button" className="ml-auto h-[26px] w-20 rounded-xs border border-[#6aa5ff]">Applica</button>
        <button type="button" className="h-[26px] w-20 rounded-xs bg-[#6aa5ff] text-[#1c2c58]">Salva</button>
      </div>
    </div>
  );
}

export default function App() {
  return (
    <div className="relative flex min-h-screen flex-col bg-[#323d5e] text-xs text-[#b9c6e4] [font-family:'Open_Sans','Noto_Sans',sans-serif]">
      <TopBar />
      <main className="flex flex-1 flex-col gap-[3px] py-[3px] pr-1 pl-1">
        <ChartToolbar />
        <div className="flex flex-1 flex-col bg-[#0a122c]">
          <div className="flex flex-1">
            <div className="relative flex-1">
              <div className="absolute inset-0"><Chart /></div>
            </div>
            <PriceAxis />
          </div>
          <TimeAxis />
        </div>
        <IndicatorBar />
      </main>
      <Tabs />
      <div className="absolute top-[47px] left-[3px] h-[448px] w-[30px] bg-[#1d2338]">
        <div className="flex h-[37px] items-center border-b border-[#333e5e] bg-[#0a122c] pl-2">
          <Logo className="h-4 w-4" />
        </div>
        <div className="mt-[25px] ml-[25px] h-7 rounded-l-xs bg-[#242b47]" />
      </div>
      <SettingsDialog />
    </div>
  );
}
